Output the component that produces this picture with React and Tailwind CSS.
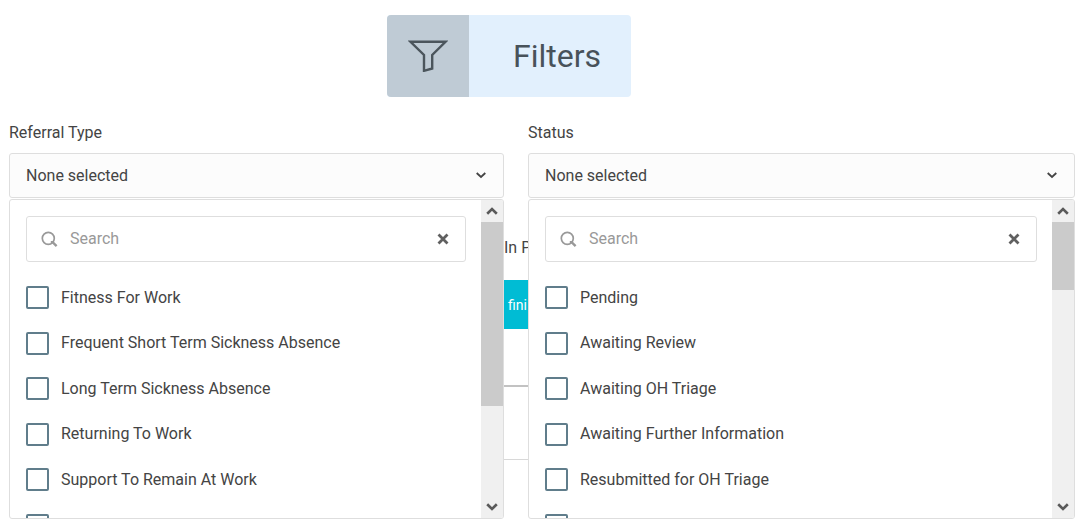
import React from "react";

const referralTypes = [
  "Fitness For Work",
  "Frequent Short Term Sickness Absence",
  "Long Term Sickness Absence",
  "Returning To Work",
  "Support To Remain At Work",
  "",
];

const statuses = [
  "Pending",
  "Awaiting Review",
  "Awaiting OH Triage",
  "Awaiting Further Information",
  "Resubmitted for OH Triage",
  "",
];

function Arrow({ className = "" }) {
  return (
    <svg viewBox="0 0 12 8" className={"h-2 w-3 " + className} fill="none" stroke="#5a5a5a" strokeWidth="2.6" aria-hidden="true">
      <path d="M1.2 1.3 6 6 10.8 1.3" />
    </svg>
  );
}

function ScrollBar({ thumb }) {
  return (
    <div className="flex w-[22px] shrink-0 flex-col bg-[#f0f0f0]">
      <button type="button" aria-label="Scroll up" className="flex h-[22px] shrink-0 items-center justify-center">
        <Arrow className="rotate-180" />
      </button>
      <div className="flex-1">
        <div className={"bg-[#cbcbcb] " + thumb} />
      </div>
      <button type="button" aria-label="Scroll down" className="flex h-[22px] shrink-0 items-center justify-center">
        <Arrow />
      </button>
    </div>
  );
}

function MultiSelect({ id, label, options, thumb }) {
  return (
    <div className="min-w-0">
      <span id={id} className="block h-8 text-base leading-6">{label}</span>
      <button
        type="button"
        aria-labelledby={id}
        aria-expanded="true"
        className="flex h-[45px] w-full items-center justify-between rounded-[3px] border border-[#dedede] bg-[#fcfcfc] pr-[17px] pl-4 text-left text-base"
      >
        None selected
        <svg viewBox="0 0 10 7" className="h-[7px] w-[10px]" fill="none" stroke="#444" strokeWidth="1.8" aria-hidden="true">
          <path d="M0.7 1 5 5 9.3 1" />
        </svg>
      </button>
      <div className="mt-px flex h-[320px] overflow-hidden rounded-[3px] border border-[#dedede] bg-white">
        <div className="min-w-0 flex-1 pt-4 pr-[15px] pl-4">
          <div className="flex h-[46px] items-center rounded-[3px] border border-[#dedede] pr-4 pl-[14px]">
            <svg viewBox="0 0 17 17" className="h-[17px] w-[17px] shrink-0" fill="none" stroke="#999" aria-hidden="true">
              <circle cx="7.3" cy="7.3" r="6" strokeWidth="1.7" />
              <path d="M9.8 11.2H11.6L15.6 15.2" strokeWidth="2.4" />
            </svg>
            <input
              type="text"
              placeholder="Search"
              aria-label={"Search " + label}
              className="ml-3 min-w-0 flex-1 text-base outline-none placeholder:text-[#999]"
            />
            <button type="button" aria-label="Clear search">
              <svg viewBox="0 0 12 12" className="h-3 w-3" fill="none" stroke="#606060" strokeWidth="2.8" aria-hidden="true">
                <path d="M1.5 1.5 10.5 10.5M10.5 1.5 1.5 10.5" />
              </svg>
            </button>
          </div>
          <div className="mt-[13px] grid h-[273px] auto-rows-fr">
            {options.map((name, i) => (
              <label key={i} className="flex items-center gap-3 text-base whitespace-nowrap">
                <input
                  type="checkbox"
                  aria-label={name || "More"}
                  className="h-[23px] w-[23px] shrink-0 appearance-none rounded-[2px] border-2 border-[#607d8b] bg-white"
                />
                {name}
              </label>
            ))}
          </div>
        </div>
        <ScrollBar thumb={thumb} />
      </div>
    </div>
  );
}

export default function App() {
  return (
    <main className="bg-white font-['Roboto','Liberation_Sans',sans-serif] text-[#444]">
      <div className="flex justify-center pt-[15px] pr-[62px]">
        <button type="button" className="flex h-[82px] overflow-hidden rounded-[4px] bg-[#e2f0fd]">
          <span className="flex h-full w-[82px] items-center justify-center bg-[#bfcbd5]">
            <svg viewBox="0 0 40 32" className="h-8 w-10" fill="none" stroke="#4b555c" strokeWidth="2.4" aria-hidden="true">
              <path d="M2.5 1.8H37.5L24.2 15V28.5L16 30.8V15Z" />
            </svg>
          </span>
          <span className="flex h-full w-[162px] items-center pl-11 text-[32px] text-[#48525a]">Filters</span>
        </button>
      </div>
      <div className="grid grid-cols-[495fr_24px_547fr] pt-6 pr-[5px] pl-[9px]">
        <MultiSelect id="referral" label="Referral Type" options={referralTypes} thumb="h-[184px]" />
        <div className="min-w-0 overflow-hidden pt-[117px] whitespace-nowrap">
          <p className="h-[42px] text-base leading-5">In P</p>
          <div className="flex h-[49px] items-center bg-[#00bcd4] pl-1 text-sm text-white">fini</div>
          <div className="mt-14 h-[2px] bg-[#c2c2c2]" />
          <div className="mt-[72px] h-px bg-[#d8d8d8]" />
        </div>
        <MultiSelect id="status" label="Status" options={statuses} thumb="h-[68px]" />
      </div>
    </main>
  );
}
